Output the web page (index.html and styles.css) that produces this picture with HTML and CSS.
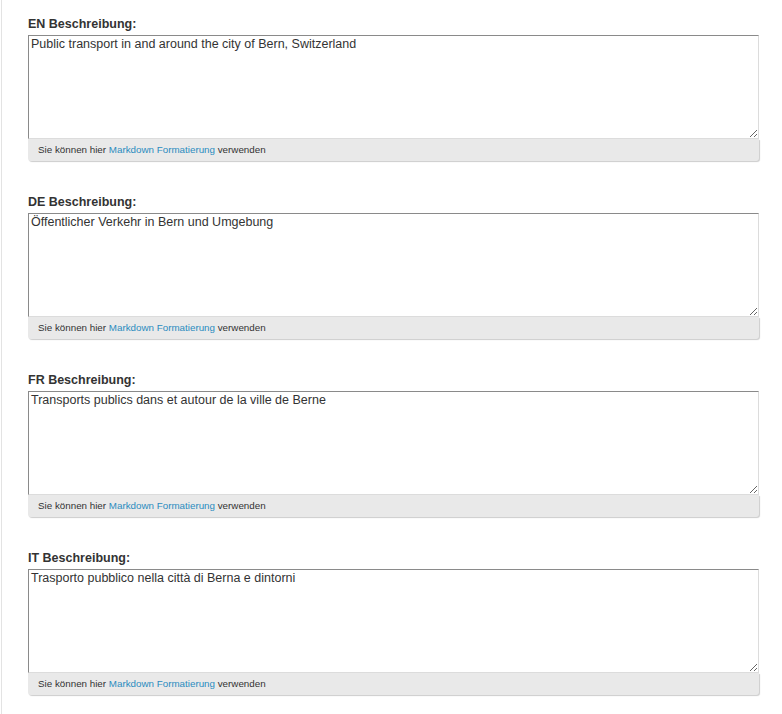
FILE: index.html
```html
<!DOCTYPE html>
<html lang="de">
<head>
<meta charset="utf-8">
<link rel="stylesheet" href="styles.css">
</head>
<body>
<div class="page">
  <div class="field">
    <label class="label">EN Beschreibung:</label>
    <textarea class="input">Public transport in and around the city of Bern, Switzerland</textarea>
    <div class="hint">Sie können hier <a href="#">Markdown Formatierung</a> verwenden</div>
  </div>
  <div class="field">
    <label class="label">DE Beschreibung:</label>
    <textarea class="input">Öffentlicher Verkehr in Bern und Umgebung</textarea>
    <div class="hint">Sie können hier <a href="#">Markdown Formatierung</a> verwenden</div>
  </div>
  <div class="field">
    <label class="label">FR Beschreibung:</label>
    <textarea class="input">Transports publics dans et autour de la ville de Berne</textarea>
    <div class="hint">Sie können hier <a href="#">Markdown Formatierung</a> verwenden</div>
  </div>
  <div class="field">
    <label class="label">IT Beschreibung:</label>
    <textarea class="input">Trasporto pubblico nella città di Berna e dintorni</textarea>
    <div class="hint">Sie können hier <a href="#">Markdown Formatierung</a> verwenden</div>
  </div>
</div>
</body>
</html>
```
FILE: styles.css
```css
html, body {
  margin: 0;
  padding: 0;
  background: #fff;
}
body {
  font-family: "Liberation Sans", Arial, sans-serif;
  color: #333;
}
.page {
  margin-left: 1px;
  border-left: 1px solid #e3e3e3;
  padding: 14px 23px 0 26px;
  height: 714px;
  box-sizing: border-box;
  overflow: hidden;
}
.field {
  display: flex;
  flex-direction: column;
  margin-bottom: 31px;
}
.label {
  display: block;
  font-weight: bold;
  font-size: 12.5px;
  line-height: 17px;
  margin: 2px 0 2px;
  color: #333;
}
.input {
  display: block;
  box-sizing: border-box;
  width: 731px;
  height: 104px;
  margin: 0;
  padding: 1px 2px;
  font-family: "Liberation Sans", Arial, sans-serif;
  font-size: 12.5px;
  line-height: 14px;
  color: #333;
  border-style: solid;
  border-width: 1px;
  border-color: #8a8a8a #dcdcdc #dcdcdc #8a8a8a;
  background: #fff;
  resize: vertical;
  outline: none;
}
.hint {
  box-sizing: border-box;
  width: 731px;
  height: 22px;
  padding: 0 10px;
  background: #e9e9e9;
  font-size: 9.8px;
  line-height: 21px;
  color: #333;
  border-radius: 0 0 3px 3px;
  box-shadow: 1px 1px 1px rgba(0,0,0,0.2);
}
.hint a {
  color: #2b8cbf;
  text-decoration: none;
}
```
